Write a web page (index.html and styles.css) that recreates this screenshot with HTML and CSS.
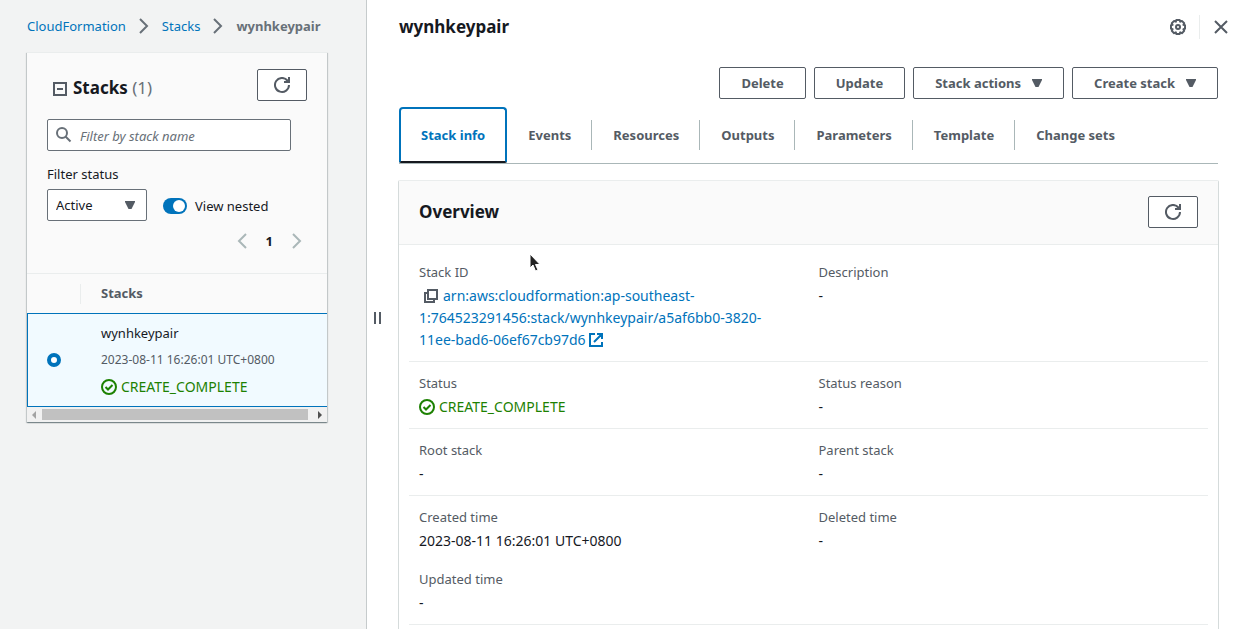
FILE: index.html
```html
<!DOCTYPE html>
<html lang="en">
<head>
<meta charset="utf-8">
<meta name="viewport" content="width=device-width, initial-scale=1">
<title>CloudFormation - Stack wynhkeypair</title>
<link rel="stylesheet" href="styles.css">
</head>
<body>
<svg class="sprite" aria-hidden="true">
  <symbol id="refresh" viewBox="0 0 16 16"><path d="M15 8a7 7 0 1 1-1.6-4.5L15 5.2M15 0v5h-5" fill="none" stroke="currentColor" stroke-width="2"/></symbol>
  <symbol id="check" viewBox="0 0 16 16"><circle cx="8" cy="8" r="7" fill="none" stroke="currentColor" stroke-width="2"/><path d="M4.5 8l2.5 2.500 4.500-4.500" fill="none" stroke="currentColor" stroke-width="2"/></symbol>
  <symbol id="next" viewBox="0 0 10 16"><path d="M1 1l7 7-7 7" fill="none" stroke="currentColor" stroke-width="2"/></symbol>
  <symbol id="prev" viewBox="0 0 10 16"><path d="M9 1L2 8l7 7" fill="none" stroke="currentColor" stroke-width="2"/></symbol>
  <symbol id="caret" viewBox="0 0 10 8"><path d="M0 0h10v1L6.500 8h-3L0 1z" fill="currentColor"/></symbol>
</svg>
<div class="app">
  <aside class="sidebar">
    <nav class="breadcrumbs" aria-label="Breadcrumbs">
      <a href="#">CloudFormation</a>
      <svg class="chevron"><use href="#next"/></svg>
      <a href="#">Stacks</a>
      <svg class="chevron"><use href="#next"/></svg>
      <span class="current">wynhkeypair</span>
    </nav>
    <section class="panel">
      <div class="panel-tools">
        <div class="panel-title">
          <button class="collapse" aria-label="Collapse stacks"><svg width="14" height="14" viewBox="0 0 14 14"><path d="M1 1h12v12H1zM4 7h6" fill="none" stroke="currentColor" stroke-width="2"/></svg></button>
          <h2>Stacks <span class="count">(1)</span></h2>
          <button class="btn icon-btn" aria-label="Refresh stacks"><svg width="16" height="16"><use href="#refresh"/></svg></button>
        </div>
        <div class="search">
          <svg width="16" height="16" viewBox="0 0 16 16"><circle cx="6" cy="6" r="5" fill="none" stroke="currentColor" stroke-width="2"/><path d="M9.500 9.500l5 5" fill="none" stroke="currentColor" stroke-width="2"/></svg>
          <input type="text" placeholder="Filter by stack name" aria-label="Filter by stack name">
        </div>
        <label class="filter-label" for="status">Filter status</label>
        <div class="filters">
          <div class="select"><select id="status"><option>Active</option><option>Deleted</option></select><svg class="caret"><use href="#caret"/></svg></div>
          <label class="toggle"><input type="checkbox" checked><span>View nested</span></label>
        </div>
        <div class="pager">
          <button aria-label="Previous page"><svg class="chevron"><use href="#prev"/></svg></button>
          <b>1</b>
          <button aria-label="Next page"><svg class="chevron"><use href="#next"/></svg></button>
        </div>
      </div>
      <table class="stacks">
        <thead><tr><th class="pick"></th><th>Stacks</th></tr></thead>
        <tbody><tr>
          <td class="pick"><input type="radio" name="stack" checked aria-label="wynhkeypair"></td>
          <td>
            <div class="stack-name">wynhkeypair</div>
            <div class="stack-time">2023-08-11 16:26:01 UTC+0800</div>
            <div class="status"><svg width="16" height="16"><use href="#check"/></svg>CREATE_COMPLETE</div>
          </td>
        </tr></tbody>
      </table>
      <div class="scrollbar" aria-hidden="true">
        <svg class="arrow off" viewBox="0 0 4 8"><path d="M4 0v8L0 4z" fill="currentColor"/></svg>
        <div class="thumb"></div>
        <svg class="arrow" viewBox="0 0 4 8"><path d="M0 0v8l4-4z" fill="currentColor"/></svg>
      </div>
    </section>
  </aside>
  <div class="resizer" role="separator" aria-orientation="vertical"></div>
  <main class="details">
    <header class="top">
      <h1>wynhkeypair</h1>
      <button class="plain" aria-label="Settings"><svg width="16" height="16" viewBox="0 0 16 16"><path d="M6.300 1h3.400l.5 1.700 1.700-.8 2.300 2.300-.8 1.700L15 6.300v3.400l-1.600.5.800 1.700-2.300 2.300-1.700-.8-.5 1.600H6.300l-.5-1.600-1.700.8-2.300-2.300.8-1.700L1 9.700V6.300l1.600-.4-.8-1.700 2.300-2.300 1.700.8z" fill="none" stroke="currentColor" stroke-width="2" stroke-linejoin="round"/><circle cx="8" cy="8" r="2" fill="none" stroke="currentColor" stroke-width="2"/></svg></button>
      <button class="plain close" aria-label="Close"><svg width="14" height="14" viewBox="0 0 14 14"><path d="M1 1l12 12M13 1L1 13" stroke="currentColor" stroke-width="2"/></svg></button>
    </header>
    <div class="actions">
      <button class="btn">Delete</button>
      <button class="btn">Update</button>
      <button class="btn">Stack actions<svg class="caret"><use href="#caret"/></svg></button>
      <button class="btn">Create stack<svg class="caret"><use href="#caret"/></svg></button>
    </div>
    <div class="tabs" role="tablist">
      <button role="tab" class="tab active" aria-selected="true">Stack info</button>
      <button role="tab" class="tab">Events</button>
      <button role="tab" class="tab">Resources</button>
      <button role="tab" class="tab">Outputs</button>
      <button role="tab" class="tab">Parameters</button>
      <button role="tab" class="tab">Template</button>
      <button role="tab" class="tab">Change sets</button>
    </div>
    <section class="card">
      <header class="card-head">
        <h2>Overview</h2>
        <button class="btn icon-btn" aria-label="Refresh overview"><svg width="16" height="16"><use href="#refresh"/></svg></button>
      </header>
      <div class="groups">
        <dl class="group">
          <div><dt>Stack ID</dt><dd><button class="copy" aria-label="Copy stack ID"><svg width="14" height="14" viewBox="0 0 14 14"><path d="M4 1h9v9H4zM4 4H1v9h9v-3" fill="none" stroke="currentColor" stroke-width="2"/></svg></button><a href="#">arn:aws:cloudformation:ap-southeast-<wbr>1:764523291456:stack/wynhkeypair/a5af6bb0-3820-<wbr>11ee-bad6-06ef67cb97d6&nbsp;<svg width="14" height="14" viewBox="0 0 14 14"><path d="M6 1H1v12h12V9M8 1h5v5M13 1L5 9" fill="none" stroke="currentColor" stroke-width="2"/></svg></a></dd></div>
          <div><dt>Description</dt><dd>-</dd></div>
        </dl>
        <dl class="group">
          <div><dt>Status</dt><dd class="status"><svg width="16" height="16"><use href="#check"/></svg>CREATE_COMPLETE</dd></div>
          <div><dt>Status reason</dt><dd>-</dd></div>
        </dl>
        <dl class="group">
          <div><dt>Root stack</dt><dd>-</dd></div>
          <div><dt>Parent stack</dt><dd>-</dd></div>
        </dl>
        <dl class="group">
          <div><dt>Created time</dt><dd>2023-08-11 16:26:01 UTC+0800</dd></div>
          <div><dt>Deleted time</dt><dd>-</dd></div>
          <div><dt>Updated time</dt><dd>-</dd></div>
        </dl>
      </div>
    </section>
  </main>
</div>
<svg class="cursor" width="12" height="20" viewBox="0 0 12 20" aria-hidden="true"><path d="M1 1v14l3-3 2.500 6 2.500-1-2.500-5.500H11z" fill="#222" stroke="#fff" stroke-width="1"/></svg>
</body>
</html>
```
FILE: styles.css
```css
* { box-sizing: border-box; }
body {
  margin: 0;
  height: 100vh;
  overflow: hidden;
  background: #fff;
  color: #16191f;
  font: 13px/22px "Noto Sans", "Open Sans", sans-serif;
}
button, input, select { font: inherit; color: inherit; }
button { background: none; border: 0; padding: 0; }
h1, h2, dl, dd { margin: 0; }
h1, h2 { font-size: 17px; line-height: 22px; font-weight: 700; }
svg { flex: none; }
a { color: #0073bb; text-decoration: none; }
.sprite { display: none; }
.chevron { display: block; width: 10px; height: 16px; }
.caret { width: 10px; height: 8px; color: #545b64; }

.app { display: flex; height: 100%; }
.sidebar {
  flex: 0 0 367px;
  padding: 15px 39px 0 27px;
  background: #f2f3f3;
  border-right: 1px solid #c6cbcc;
}
.breadcrumbs {
  display: flex;
  align-items: center;
  gap: 13px;
  height: 22px;
  margin-bottom: 15px;
  color: #687078;
}
.current { font-weight: 700; }

.panel {
  background: #fafafa;
  border-top: 1px solid #eaeded;
  box-shadow: 0 1px 1px 0 rgba(0, 28, 36, .3), 1px 1px 1px 0 rgba(0, 28, 36, .15), -1px 1px 1px 0 rgba(0, 28, 36, .15);
}
.panel-tools { padding: 16px 20px 21px; border-bottom: 1px solid #eaeded; }
.panel-title { display: flex; align-items: center; gap: 6px; margin-bottom: 18px; padding-left: 6px; }
.panel-title h2 { flex: 1; padding-top: 6px; }
.collapse { display: flex; margin-top: 8px; color: #545b64; }
.count { font-weight: 400; color: #687078; }
.btn {
  display: flex;
  align-items: center;
  justify-content: center;
  gap: 11px;
  height: 32px;
  padding: 0 21px;
  background: #fff;
  border: 1px solid #545b64;
  border-radius: 2px;
  color: #545b64;
  font-weight: 700;
}
.icon-btn { width: 50px; padding: 0; }
.search {
  display: flex;
  align-items: center;
  gap: 8px;
  height: 32px;
  margin-right: 16px;
  padding: 0 8px;
  background: #fff;
  border: 1px solid #687078;
  border-radius: 2px;
  color: #687078;
}
.search input { flex: 1; min-width: 0; padding: 2px 0 0; border: 0; outline: 0; background: none; }
.search input::placeholder { color: #687078; opacity: 1; font-style: italic; }
.filter-label { display: block; margin: 12px 0 4px; }
.filters { display: flex; align-items: center; gap: 16px; }
.select { display: grid; grid-template-columns: 1fr 22px; align-items: center; width: 100px; height: 32px; }
.select select {
  grid-area: 1 / 1 / 2 / 3;
  height: 32px;
  padding: 0 8px;
  appearance: none;
  background: #fff;
  border: 1px solid #687078;
  border-radius: 2px;
}
.select .caret { grid-area: 1 / 2; z-index: 1; pointer-events: none; }
.toggle { display: flex; align-items: center; gap: 8px; padding-top: 2px; }
.toggle input {
  appearance: none;
  display: flex;
  align-items: center;
  justify-content: flex-end;
  width: 24px;
  height: 16px;
  margin: 0;
  padding: 2px;
  border-radius: 8px;
  background: #0073bb;
}
.toggle input::before { content: ""; width: 12px; height: 12px; border-radius: 50%; background: #fff; }
.pager { display: flex; justify-content: flex-end; align-items: center; gap: 19px; height: 22px; margin-top: 9px; padding-right: 5px; }
.pager button { color: #aab7b8; }

.stacks { width: 100%; border-collapse: separate; border-spacing: 0; text-align: left; }
.stacks th { height: 39px; padding: 0 20px 2px; color: #545b64; }
.stacks th.pick { background: linear-gradient(#eaeded, #eaeded) right center / 1px 20px no-repeat; }
.stacks td { padding: 8px 20px; border: 1px solid #0073bb; border-width: 1px 0; background: #f1faff; }
.stacks .pick { width: 54px; }
.stacks td.pick { border-left-width: 1px; padding: 0 0 0 19px; }
.stack-time { margin: 5px 0; font-size: 12px; color: #545b64; }
.stacks input {
  display: block;
  appearance: none;
  width: 14px;
  height: 14px;
  margin: 0;
  border: 4px solid #0073bb;
  border-radius: 50%;
  background: #fff;
}
.status { display: flex; align-items: center; gap: 4px; font-size: 14px; color: #1d8102; }
.scrollbar { display: flex; align-items: center; justify-content: space-between; height: 15px; padding: 0 5px; background: #f1f1f1; }
.thumb { flex: 1; height: 11px; margin: 0 10px 0 6px; background: #c1c1c1; }
.arrow { width: 4px; height: 8px; color: #505050; }
.arrow.off { color: #a3a3a3; }

.resizer { align-self: center; flex: none; width: 7px; height: 12px; margin: 6px 0 0 7px; border: 2px solid #545b64; border-width: 0 2px; }
.details { flex: 1; min-width: 0; padding: 14px 24px 0 18px; }
.top { display: flex; align-items: center; height: 25px; margin-right: -10px; }
.top h1 { flex: 1; }
.plain { display: flex; color: #545b64; }
.close { margin-left: 13px; padding: 5px 0 5px 14px; border-left: 1px solid #eaeded; }
.actions { display: flex; justify-content: flex-end; gap: 8px; margin: 28px 0 8px; }
.tabs { display: flex; border-bottom: 1px solid #aab7b8; }
.tab {
  padding: 0 21px;
  height: 56px;
  color: #545b64;
  font-weight: 700;
  background: linear-gradient(#aab7b8, #aab7b8) right center / 1px 30px no-repeat;
}
.tab:last-child { background: none; }
.tab.active {
  padding: 0 20px;
  color: #0073bb;
  background: none;
  border: 2px solid #0073bb;
  border-bottom-color: #16191f;
  border-radius: 4px 4px 2px 2px;
}
.card { margin: 16px -1px 0; border: 1px solid #d5dbdb; border-top-color: #eaeded; border-radius: 2px; }
.card-head {
  display: flex;
  align-items: center;
  justify-content: space-between;
  padding: 15px 20px 16px;
  background: #fafafa;
  border-bottom: 1px solid #eaeded;
}
.groups { padding: 6px 10px 20px; }
.group { display: grid; grid-template-columns: 1fr 1fr; row-gap: 16px; padding: 10px 0; border-bottom: 1px solid #eaeded; }
.group > div { padding: 0 20px 0 10px; }
dt { margin-bottom: 2px; color: #545b64; }
dd { font-size: 14px; }
dd svg { vertical-align: -2px; }
.copy { margin: 0 5px; line-height: 20px; color: #545b64; }
.cursor { position: absolute; left: 529px; top: 253px; }
```
